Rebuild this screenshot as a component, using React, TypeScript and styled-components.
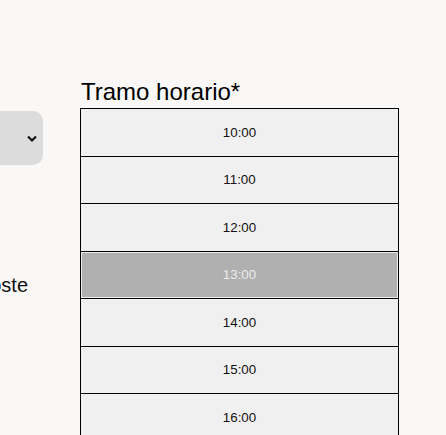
import React, { useState } from 'react';
import styled, { createGlobalStyle } from 'styled-components';

const GlobalStyle = createGlobalStyle`
  html, body {
    margin: 0;
    padding: 0;
    background: #f9f8f6;
    font-family: 'Liberation Sans', Arial, sans-serif;
    color: #111;
    overflow: hidden;
  }
`;

const Page = styled.div`
  display: flex;
  align-items: flex-start;
  gap: 37px;
  padding-top: 78px;
  height: 435px;
  box-sizing: border-box;
  overflow: hidden;
`;

// left column is cut off by the viewport edge
const LeftColumn = styled.div`
  width: 180px;
  margin-left: -137px;
  display: flex;
  flex-direction: column;
  padding-top: 33px;
`;

const SelectBox = styled.div`
  height: 54px;
  border-radius: 10px;
  background: #dcdcdc;
  display: flex;
  align-items: center;
  justify-content: flex-end;
  padding-right: 4px;
`;

const FieldLabel = styled.div`
  margin-top: 109px;
  font-size: 20px;
  line-height: 23px;
  text-align: right;
  padding-right: 15px;
  white-space: nowrap;
`;

const RightColumn = styled.div`
  width: 319px;
  display: flex;
  flex-direction: column;
`;

const Heading = styled.h2`
  margin: 0 0 2px 1px;
  font-size: 24px;
  line-height: 28px;
  font-weight: normal;
  color: #000;
`;

const SlotList = styled.div`
  border: 1px solid #000;
  border-bottom: none;
  display: flex;
  flex-direction: column;
`;

const Slot = styled.button<{ selected: boolean }>`
  height: 47.5px;
  box-sizing: border-box;
  border: none;
  border-bottom: 1px solid #000;
  background: ${p => (p.selected ? '#b0b0b0' : '#f0f0f0')};
  color: ${p => (p.selected ? '#ececec' : '#111')};
  box-shadow: ${p => (p.selected ? 'inset 0 0 0 1px #ececec' : 'none')};
  font-family: 'Liberation Sans', Arial, sans-serif;
  font-size: 13.333px;
  padding: 0;
  cursor: pointer;
`;

const slots = ['10:00', '11:00', '12:00', '13:00', '14:00', '15:00', '16:00', '17:00', '18:00'];

export default function App() {
  const [selected, setSelected] = useState('13:00');

  return (
    <>
      <GlobalStyle />
      <Page>
        <LeftColumn>
          <SelectBox>
            <svg width="14" height="14" viewBox="0 0 14 14">
              <path d="M3 5.5 L7 9.5 L11 5.5" fill="none" stroke="#111" strokeWidth="2.2" />
            </svg>
          </SelectBox>
          <FieldLabel>Tipo de coste</FieldLabel>
        </LeftColumn>
        <RightColumn>
          <Heading>Tramo horario*</Heading>
          <SlotList>
            {slots.map(s => (
              <Slot key={s} selected={s === selected} onClick={() => setSelected(s)}>
                {s}
              </Slot>
            ))}
          </SlotList>
        </RightColumn>
      </Page>
    </>
  );
}
